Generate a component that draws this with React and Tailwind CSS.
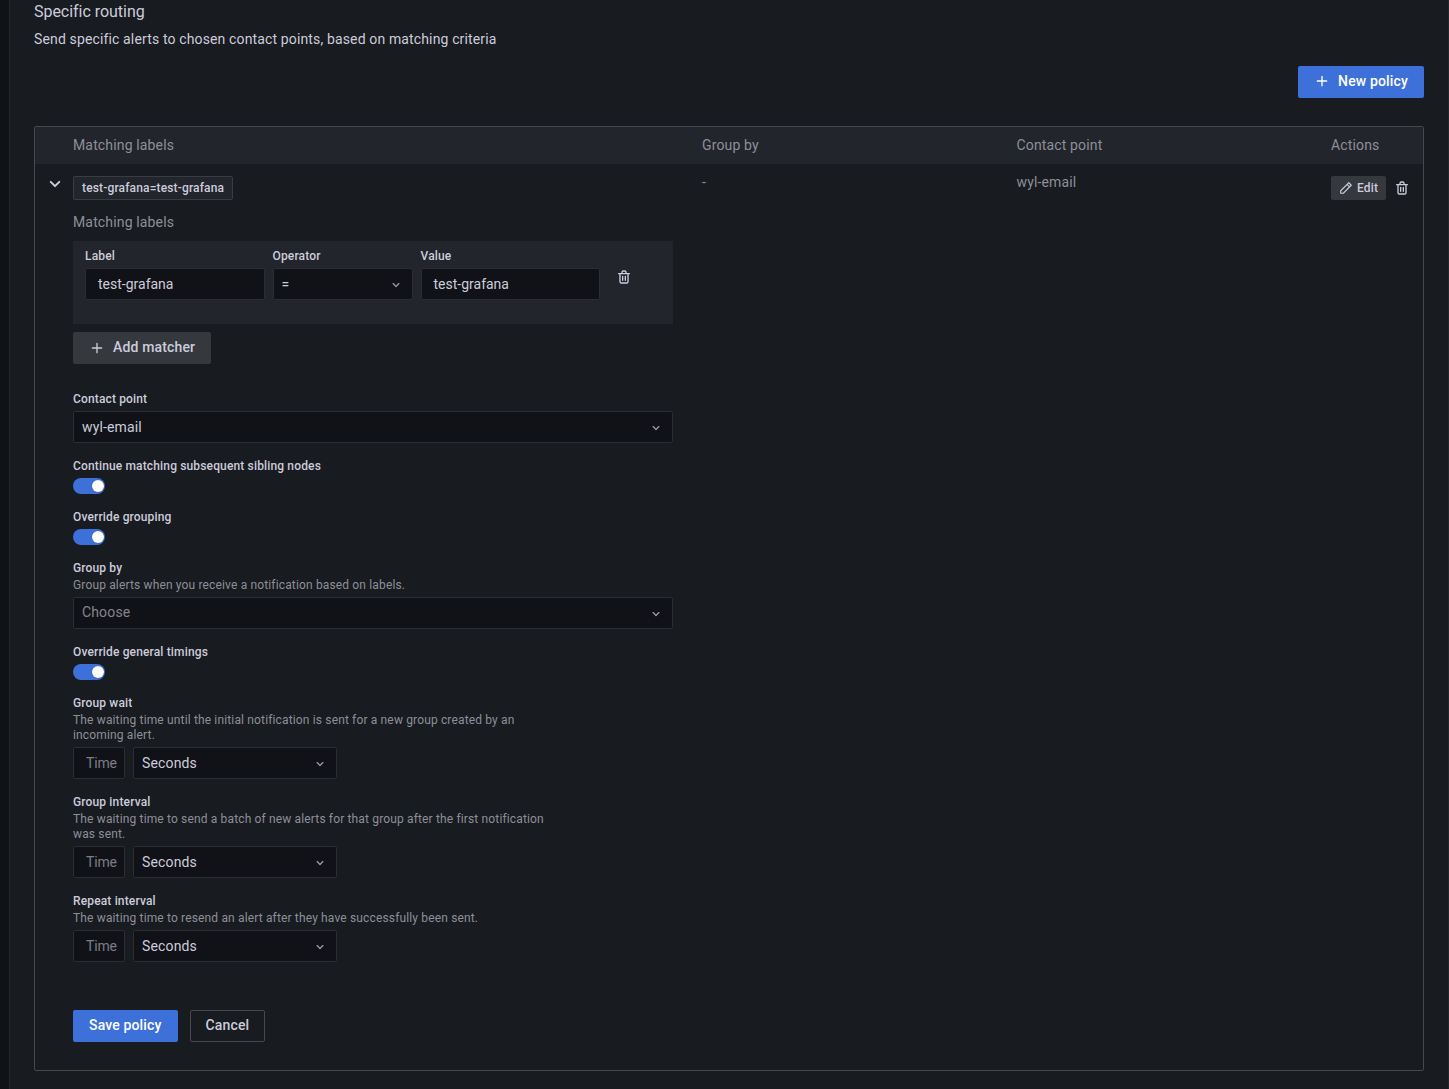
import React from "react";

const ICONS = {
  plus: "M19,11H13V5a1,1,0,0,0-2,0v6H5a1,1,0,0,0,0,2h6v6a1,1,0,0,0,2,0V13h6a1,1,0,0,0,0-2Z",
  angleDown:
    "M17,9.17a1,1,0,0,0-1.41,0L12,12.71,8.46,9.17a1,1,0,0,0-1.41,0,1,1,0,0,0,0,1.42l4.24,4.24a1,1,0,0,0,1.42,0L17,10.59A1,1,0,0,0,17,9.17Z",
  pen: "M22,7.24a1,1,0,0,0-.29-.71L17.47,2.29A1,1,0,0,0,16.76,2a1,1,0,0,0-.71.29L13.22,5.12h0L2.29,16.05a1,1,0,0,0-.29.71V21a1,1,0,0,0,1,1H7.24A1,1,0,0,0,8,21.71L18.87,10.78h0L21.71,8a1.19,1.19,0,0,0,.22-.33,1,1,0,0,0,0-.24.7.7,0,0,0,0-.14ZM6.83,20H4V17.17l9.93-9.93,2.83,2.83ZM18.17,8.66,15.34,5.83l1.42-1.41,2.82,2.82Z",
  trash:
    "M10,18a1,1,0,0,0,1-1V11a1,1,0,0,0-2,0v6A1,1,0,0,0,10,18ZM20,6H16V5a3,3,0,0,0-3-3H11A3,3,0,0,0,8,5V6H4A1,1,0,0,0,4,8H5V19a3,3,0,0,0,3,3h8a3,3,0,0,0,3-3V8h1a1,1,0,0,0,0-2ZM10,5a1,1,0,0,1,1-1h2a1,1,0,0,1,1,1V6H10Zm7,14a1,1,0,0,1-1,1H8a1,1,0,0,1-1-1V8H17Zm-3-1a1,1,0,0,0,1-1V11a1,1,0,0,0-2,0v6A1,1,0,0,0,14,18Z",
};

function Icon({ name, className }) {
  return (
    <svg viewBox="0 0 24 24" fill="currentColor" className={`shrink-0 ${className}`}>
      <path d={ICONS[name]} />
    </svg>
  );
}

function Field({ label, description, children }) {
  return (
    <div className="mb-4">
      <div className="mb-1 text-xs/[15px] font-medium">
        {label}
        {description && (
          <div className="mt-0.5 w-[480px] font-normal text-[#8e8e9a]">{description}</div>
        )}
      </div>
      {children}
    </div>
  );
}

function Select({ value, placeholder, className }) {
  return (
    <div
      className={`flex h-8 items-center justify-between rounded-xs border border-[#2c2d34] bg-[#111217] pr-2 pl-2 ${className}`}
    >
      {value ? (
        <span className="pb-px">{value}</span>
      ) : (
        <span className="pb-0.5 text-[#84858f]">{placeholder}</span>
      )}
      <Icon name="angleDown" className="mt-0.5 size-4 text-[#9899a5]" />
    </div>
  );
}

function Input({ value, className }) {
  return (
    <div
      className={`flex h-8 items-center rounded-xs border border-[#2c2d34] bg-[#111217] px-3 pb-px tracking-normal ${className}`}
    >
      {value}
    </div>
  );
}

function Toggle() {
  return (
    <div className="flex h-4 w-8 items-center justify-end rounded-full bg-[#3d71d9] pr-px">
      <div className="size-3 rounded-full bg-white shadow-[0_0_1px_rgba(0,0,0,0.3)]" />
    </div>
  );
}

function Timing({ label, description }) {
  return (
    <Field label={label} description={description}>
      <div className="flex gap-2">
        <div className="flex h-8 w-[52px] items-center rounded-xs border border-[#2c2d34] bg-[#111217] pb-px pl-3 tracking-[-0.01em] text-[#7c7d87]">
          Time
        </div>
        <Select value="Seconds" className="w-[204px]" />
      </div>
    </Field>
  );
}

const COLUMNS = "grid grid-cols-[38px_629px_314.5px_314.5px_1fr]";

export default function App() {
  return (
    <div className="flex h-[1089px] w-[1449px] overflow-hidden bg-[#111217] font-[Roboto,sans-serif] text-sm/[22px] tracking-[0.01071em] text-[#ccccdc]">
      <main className="ml-[9px] flex grow flex-col border-x border-[#25272c] bg-[#181b1f] pr-6 pl-6">
        <h2 className="pt-px text-base/[22px] tracking-[-0.002em]">Specific routing</h2>
        <p className="mt-[5px] tracking-[0.01em]">
          Send specific alerts to chosen contact points, based on matching criteria
        </p>
        <button className="mt-4 flex h-8 items-center gap-2 self-end rounded-xs bg-[#3d71d9] px-4 font-medium text-white">
          <Icon name="plus" className="mb-0.5 size-4" />
          <span className="pb-0.5">New policy</span>
        </button>

        <section className="mt-7 h-[945px] rounded-xs border border-[#46484e]">
          <div className={`${COLUMNS} h-[37px] items-center bg-[#22252b] pb-px text-[#8e8e9a]`}>
            <span />
            <span>Matching labels</span>
            <span>Group by</span>
            <span>Contact point</span>
            <span>Actions</span>
          </div>

          <div className={`${COLUMNS} h-[47px] pt-3 text-[#8e8e9a]`}>
            <Icon name="angleDown" className="-mt-1 ml-2 size-6 text-[#ccccdc]" />
            <div>
              <span className="inline-flex h-6 items-center rounded-xs border border-[#3a3c43] bg-[#22252b] px-2 text-xs font-medium text-[#ccccdc]">
                test-grafana=test-grafana
              </span>
            </div>
            <span className="-mt-[5px]">-</span>
            <span className="-mt-[5px]">wyl-email</span>
            <div className="flex h-6 items-center text-[#ccccdc]">
              <button className="flex h-6 w-[55px] items-center gap-1 rounded-xs bg-[#35383d] pl-2 text-xs font-medium">
                <Icon name="pen" className="size-3.5" />
                Edit
              </button>
              <Icon name="trash" className="ml-2 size-4" />
            </div>
          </div>

          <div className="ml-[38px] w-[600px]">
            <h3 className="mb-[19px] h-[11px] text-sm/[22px] text-[#8e8e9a]">Matching labels</h3>
            <div className="flex h-[83px] gap-2 bg-[#22252b] px-3 pt-2">
              <Field label="Label">
                <Input value="test-grafana" className="w-[179.5px]" />
              </Field>
              <Field label="Operator">
                <Select value="=" className="w-[140px]" />
              </Field>
              <Field label="Value">
                <Input value="test-grafana" className="w-[179.5px]" />
              </Field>
              <Icon name="trash" className="mt-5 ml-2 size-4" />
            </div>
            <button className="mt-2 mb-7 flex h-8 items-center gap-2 rounded-xs bg-[#35383d] px-4 font-medium">
              <Icon name="plus" className="size-4" />
              <span className="pb-0.5">Add matcher</span>
            </button>

            <Field label="Contact point">
              <Select value="wyl-email" className="w-full" />
            </Field>
            <Field label="Continue matching subsequent sibling nodes">
              <Toggle />
            </Field>
            <Field label="Override grouping">
              <Toggle />
            </Field>
            <Field
              label="Group by"
              description="Group alerts when you receive a notification based on labels."
            >
              <Select placeholder="Choose" className="w-full" />
            </Field>
            <Field label="Override general timings">
              <Toggle />
            </Field>
            <Timing
              label="Group wait"
              description="The waiting time until the initial notification is sent for a new group created by an incoming alert."
            />
            <Timing
              label="Group interval"
              description="The waiting time to send a batch of new alerts for that group after the first notification was sent."
            />
            <Timing
              label="Repeat interval"
              description="The waiting time to resend an alert after they have successfully been sent."
            />

            <div className="mt-12 flex gap-3">
              <button className="h-8 rounded-xs bg-[#3d71d9] px-4 pb-0.5 font-medium text-white">
                Save policy
              </button>
              <button className="h-8 rounded-xs border border-[#46484e] px-[15px] pb-0.5 font-medium">
                Cancel
              </button>
            </div>
          </div>
        </section>
      </main>
    </div>
  );
}
